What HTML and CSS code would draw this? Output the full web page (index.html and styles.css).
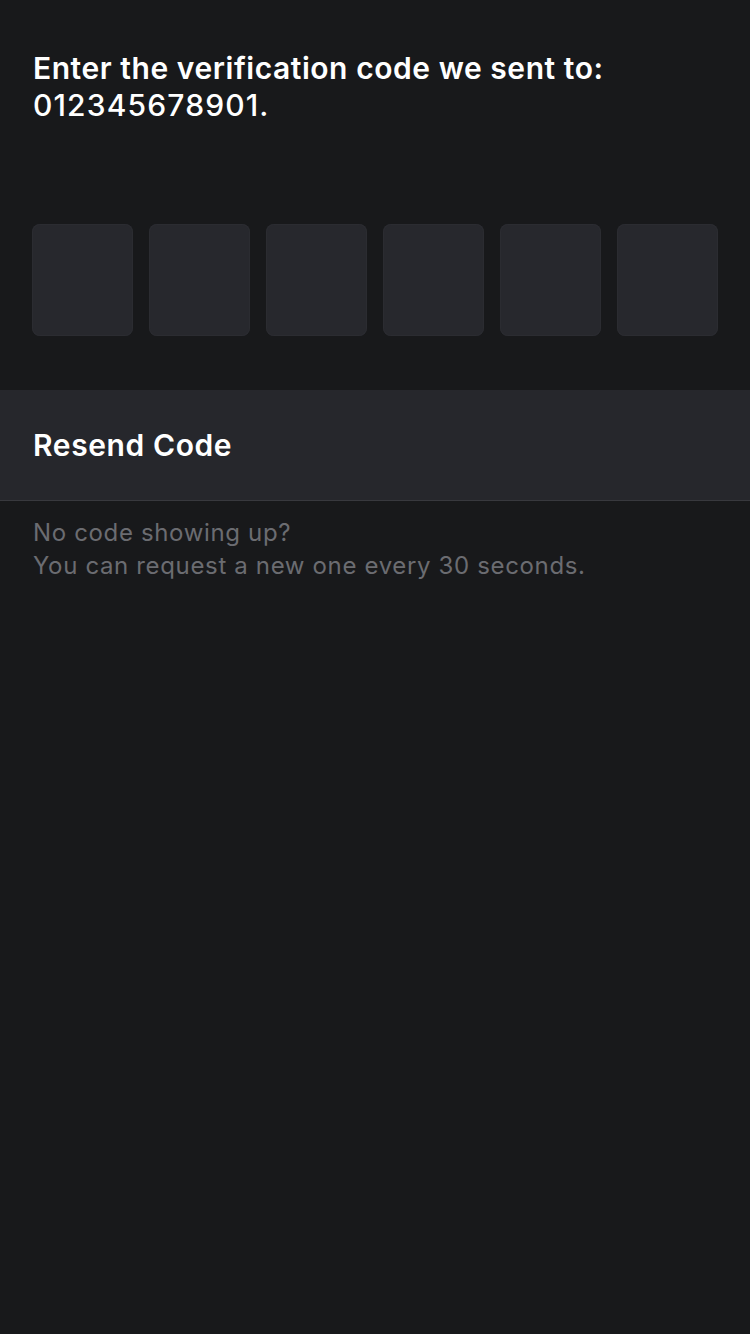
FILE: index.html
```html
<!DOCTYPE html>
<html>
<head>
<meta charset="utf-8">
<link rel="stylesheet" href="styles.css">
</head>
<body>
<div class="page">
  <h1 class="title">Enter the verification code we sent to:<br><span class="number">012345678901.</span></h1>
  <div class="code-row">
    <div class="code-box"></div>
    <div class="code-box"></div>
    <div class="code-box"></div>
    <div class="code-box"></div>
    <div class="code-box"></div>
    <div class="code-box"></div>
  </div>
  <div class="resend">Resend Code</div>
  <p class="hint">No code showing up?<br>You can request a new one every 30 seconds.</p>
</div>
</body>
</html>
```
FILE: styles.css
```css
html, body {
  margin: 0;
  padding: 0;
  background: #18191b;
}
.page {
  width: 750px;
  min-height: 1334px;
  background: #18191b;
  font-family: Inter, "Noto Sans", sans-serif;
}
.title {
  margin: 0;
  padding: 50px 33px 0;
  font-size: 30px;
  line-height: 37px;
  font-weight: 600;
  color: #ffffff;
  letter-spacing: 0.55px;
}
.number {
  font-weight: 500;
  letter-spacing: 1.15px;
}
.code-row {
  display: flex;
  gap: 16px;
  padding: 0 32px;
  margin-top: 100px;
}
.code-box {
  width: 101px;
  height: 112px;
  border-radius: 8px;
  background: #27282d;
  box-shadow: inset 0 0 0 1px #2b2c31;
}
.resend {
  margin-top: 54px;
  height: 110px;
  display: flex;
  align-items: center;
  padding: 0 33px;
  background: #26272c;
  border-bottom: 1px solid #38393e;
  color: #ffffff;
  font-size: 30px;
  font-weight: 600;
  letter-spacing: 0.6px;
}
.hint {
  margin: 0;
  padding: 15px 33px 0;
  font-size: 24px;
  line-height: 33px;
  color: #6b6c71;
  letter-spacing: 0.65px;
}
```
